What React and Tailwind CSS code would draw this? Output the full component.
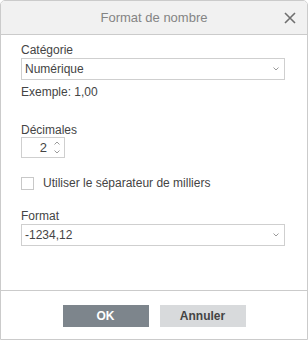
import { useState } from "react";

const Chevron = () => (
    <svg width="6" height="4" viewBox="0 0 6 4" className="text-[#9a9a9a]">
        <path d="M0.5 0.5 L3 3 L5.5 0.5" fill="none" stroke="currentColor" strokeWidth="1" />
    </svg>
);

function Select({ value }) {
    return (
        <div className="h-[22px] w-[264px] border border-[#cfcfcf] bg-white flex items-center justify-between pl-[3px] pr-[5px]">
            <span>{value}</span>
            <Chevron />
        </div>
    );
}

export default function App() {
    const [checked, setChecked] = useState(false);

    return (
        <div className="w-[308px] h-[340px] bg-white font-['Liberation_Sans',Arial,sans-serif] text-[12px] text-[#444]">
            <div className="w-full h-full flex flex-col border border-[#cbcbcb] rounded-t-[5px] overflow-hidden">
                {/* Header */}
                <div className="h-[34px] shrink-0 bg-[#f1f1f1] border-b border-[#cbcbcb] flex items-center justify-center relative">
                    <span className="text-[13px] text-[#848484]">Format de nombre</span>
                    <svg width="12" height="12" viewBox="0 0 12 12" className="absolute right-[11px] top-[11px] text-[#6f6f6f]">
                        <path d="M1 1 L11 11 M11 1 L1 11" stroke="currentColor" strokeWidth="1.6" />
                    </svg>
                </div>

                {/* Body */}
                <div className="flex-1 px-[20px] pt-[7px]">
                    <div className="h-[16px] leading-[16px]">Catégorie</div>
                    <Select value="Numérique" />
                    <div className="mt-[4px] h-[16px] leading-[16px]">Exemple: 1,00</div>

                    <div className="mt-[22px] h-[16px] leading-[16px]">Décimales</div>
                    <div className="mt-[-1px] w-[44px] h-[21px] border border-[#cfcfcf] flex items-center justify-end pr-[4px] gap-[7px]">
                        <span className="text-[13px]">2</span>
                        <div className="flex flex-col gap-[5px] text-[#9a9a9a]">
                            <svg width="6" height="4" viewBox="0 0 6 4"><path d="M0.5 3.5 L3 1 L5.5 3.5" fill="none" stroke="currentColor" /></svg>
                            <svg width="6" height="4" viewBox="0 0 6 4"><path d="M0.5 0.5 L3 3 L5.5 0.5" fill="none" stroke="currentColor" /></svg>
                        </div>
                    </div>

                    <label className="mt-[16px] flex items-center gap-[9px] cursor-pointer">
                        <span
                            onClick={() => setChecked(!checked)}
                            className="w-[13px] h-[13px] border border-[#c8c8c8] bg-white flex items-center justify-center text-[10px]"
                        >
                            {checked ? "✓" : ""}
                        </span>
                        <span>Utiliser le séparateur de milliers</span>
                    </label>

                    <div className="mt-[16px] h-[16px] leading-[16px]">Format</div>
                    <Select value="-1234,12" />
                </div>

                {/* Footer */}
                <div className="h-[49px] shrink-0 border-t border-[#cbcbcb] flex items-start justify-center gap-[11px] pt-[14px]">
                    <button className="w-[86px] h-[22px] bg-[#7d858c] text-white font-bold">OK</button>
                    <button className="w-[86px] h-[22px] bg-[#d8dadc] text-[#444] font-bold">Annuler</button>
                </div>
            </div>
        </div>
    );
}
